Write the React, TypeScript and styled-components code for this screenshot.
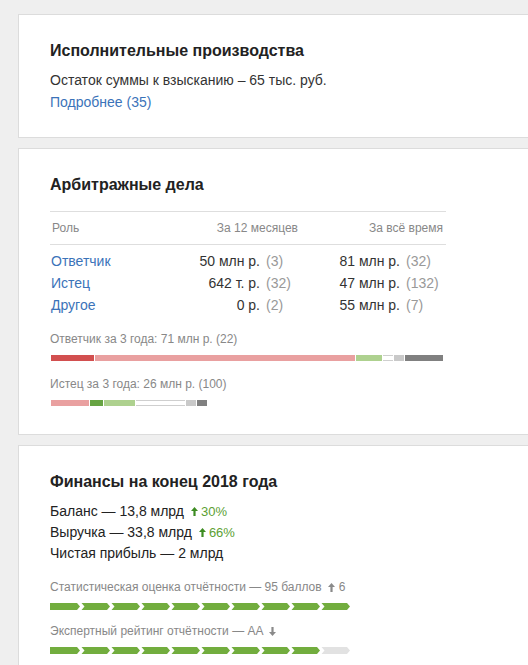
import styled, { createGlobalStyle } from "styled-components";

const GlobalStyle = createGlobalStyle`
  html, body {
    margin: 0;
    padding: 0;
    overflow: hidden;
    background: #efefef;
  }
  body {
    font-family: "Liberation Sans", Arial, sans-serif;
    color: #333;
  }
`;

type Part = { w: number; c: string; outline?: boolean };

const defendantBar: Part[] = [
  { w: 43, c: "#d24f4f" },
  { w: 260, c: "#e9a0a0" },
  { w: 26, c: "#aed18f" },
  { w: 10, c: "#fff", outline: true },
  { w: 10, c: "#c9c9c9" },
  { w: 38, c: "#808080" },
];

const plaintiffBar: Part[] = [
  { w: 38, c: "#e9a0a0" },
  { w: 13, c: "#67a443" },
  { w: 31, c: "#aed18f" },
  { w: 49, c: "#fff", outline: true },
  { w: 10, c: "#c9c9c9" },
  { w: 10, c: "#808080" },
];

const cases = [
  { role: "Ответчик", year: "50 млн р.", yearN: "(3)", all: "81 млн р.", allN: "(32)" },
  { role: "Истец", year: "642 т. р.", yearN: "(32)", all: "47 млн р.", allN: "(132)" },
  { role: "Другое", year: "0 р.", yearN: "(2)", all: "55 млн р.", allN: "(7)" },
];

function Arrow({ down, color }: { down?: boolean; color: string }) {
  return (
    <svg width="7" height="9" viewBox="0 0 7 9" style={{ transform: down ? "rotate(180deg)" : undefined }}>
      <path d="M3.5 0 L7 4 H4.6 V9 H2.4 V4 H0 Z" fill={color} />
    </svg>
  );
}

function ScoreBar({ filled }: { filled: number }) {
  const seg = 30;
  const h = 7;
  return (
    <ScoreSvg width={300} height={h} viewBox={`0 0 300 ${h}`}>
      {Array.from({ length: 10 }).map((_, i) => {
        const l = i * seg + (i > 0 ? 1.5 : 0);
        const r = (i + 1) * seg;
        const pts =
          i === 0
            ? `${l},0 ${r - 3},0 ${r},${h / 2} ${r - 3},${h} ${l},${h}`
            : `${l},0 ${r - 3},0 ${r},${h / 2} ${r - 3},${h} ${l},${h} ${l + 3},${h / 2}`;
        return <polygon key={i} points={pts} fill={i < filled ? "#72ad3e" : "#e2e2e2"} />;
      })}
    </ScoreSvg>
  );
}

export default function App() {
  return (
    <>
      <GlobalStyle />
      <Page>
        <Card>
          <Title>Исполнительные производства</Title>
          <Text>Остаток суммы к взысканию – 65 тыс. руб.</Text>
          <MoreLink href="#">Подробнее (35)</MoreLink>
        </Card>

        <Card $bottom={28}>
          <Title>Арбитражные дела</Title>
          <Table>
            <HeadRow>
              <HeadCell>Роль</HeadCell>
              <HeadCell $span $pr={7}>За 12 месяцев</HeadCell>
              <HeadCell $span $pr={3}>За всё время</HeadCell>
            </HeadRow>
            <Body>
              {cases.map((r) => (
                <Row key={r.role}>
                  <RoleLink href="#">{r.role}</RoleLink>
                  <Value>{r.year}</Value>
                  <Count>{r.yearN}</Count>
                  <Value>{r.all}</Value>
                  <Count>{r.allN}</Count>
                </Row>
              ))}
            </Body>
          </Table>

          <Label $top={15}>Ответчик за 3 года: 71 млн р. (22)</Label>
          <Stack>
            {defendantBar.map((p, i) => (
              <Piece key={i} $w={p.w} $c={p.c} $outline={p.outline} />
            ))}
          </Stack>
          <Label $top={15}>Истец за 3 года: 26 млн р. (100)</Label>
          <Stack>
            {plaintiffBar.map((p, i) => (
              <Piece key={i} $w={p.w} $c={p.c} $outline={p.outline} />
            ))}
          </Stack>
        </Card>

        <Card $bottom={26}>
          <Title>Финансы на конец 2018 года</Title>
          <Lines>
            <Line>
              Баланс — 13,8 млрд
              <Delta>
                <Arrow color="#3d8c22" />
                30%
              </Delta>
            </Line>
            <Line>
              Выручка — 33,8 млрд
              <Delta>
                <Arrow color="#3d8c22" />
                66%
              </Delta>
            </Line>
            <Line>Чистая прибыль — 2 млрд</Line>
          </Lines>

          <Label $top={15}>
            Статистическая оценка отчётности — 95 баллов
            <Mark>
              <Arrow color="#8a8a8a" />6
            </Mark>
          </Label>
          <ScoreBar filled={10} />
          <Label $top={13}>
            Экспертный рейтинг отчётности — АА
            <Mark>
              <Arrow down color="#8a8a8a" />
            </Mark>
          </Label>
          <ScoreBar filled={9} />
        </Card>
      </Page>
    </>
  );
}

const Page = styled.div`
  display: flex;
  flex-direction: column;
  gap: 10px;
  padding: 14px 0 0 18px;
`;

const Card = styled.section<{ $bottom?: number }>`
  width: 530px;
  box-sizing: border-box;
  background: #fff;
  border: 1px solid #dcdcdc;
  padding: 26px 0 ${(p) => p.$bottom ?? 24}px 31px;
`;

const Title = styled.h2`
  margin: 0;
  font-size: 16px;
  line-height: 20px;
  font-weight: bold;
  color: #222;
`;

const Text = styled.p`
  margin: 8px 0 0;
  font-size: 14px;
  line-height: 22px;
  color: #333;
`;

const MoreLink = styled.a`
  display: block;
  font-size: 14px;
  line-height: 22px;
  color: #3b73b9;
  text-decoration: none;
`;

const Table = styled.div`
  width: 396px;
  margin-top: 16px;
`;

const grid = `
  display: grid;
  grid-template-columns: 130px 80px 45px 95px 46px;
`;

const HeadRow = styled.div`
  ${grid}
  border-top: 1px solid #dedede;
  border-bottom: 1px solid #dedede;
  font-size: 12px;
  line-height: 32px;
  color: #888;
`;

const HeadCell = styled.div<{ $span?: boolean; $pr?: number }>`
  grid-column: ${(p) => (p.$span ? "span 2" : "auto")};
  text-align: ${(p) => (p.$span ? "right" : "left")};
  padding-left: ${(p) => (p.$span ? 0 : 2)}px;
  padding-right: ${(p) => p.$pr ?? 0}px;
`;

const Body = styled.div`
  padding-top: 5px;
`;

const Row = styled.div`
  ${grid}
  font-size: 14px;
  line-height: 22px;
`;

const RoleLink = styled.a`
  padding-left: 1px;
  color: #3b73b9;
  text-decoration: none;
`;

const Value = styled.span`
  text-align: right;
  color: #333;
  white-space: nowrap;
`;

const Count = styled.span`
  padding-left: 6px;
  color: #999;
  white-space: nowrap;
`;

const Label = styled.div<{ $top: number }>`
  display: flex;
  align-items: center;
  margin-top: ${(p) => p.$top}px;
  font-size: 12px;
  line-height: 16px;
  color: #888;
`;

const Stack = styled.div`
  display: flex;
  gap: 1px;
  margin-top: 8px;
  margin-left: 1px;
  height: 6px;
`;

const Piece = styled.div<{ $w: number; $c: string; $outline?: boolean }>`
  width: ${(p) => p.$w}px;
  flex: none;
  box-sizing: border-box;
  background: ${(p) => p.$c};
  border-top: ${(p) => (p.$outline ? "1px solid #cfcfcf" : "none")};
  border-bottom: ${(p) => (p.$outline ? "1px solid #cfcfcf" : "none")};
`;

const Lines = styled.div`
  margin-top: 9px;
  font-size: 14px;
  line-height: 21px;
  color: #222;
`;

const Line = styled.div`
  display: flex;
  align-items: center;
`;

const Delta = styled.span`
  display: inline-flex;
  align-items: center;
  gap: 3px;
  margin-left: 7px;
  font-size: 13px;
  color: #5c9f33;
`;

const Mark = styled.span`
  display: inline-flex;
  align-items: center;
  gap: 4px;
  margin-left: 6px;
`;

const ScoreSvg = styled.svg`
  display: block;
  margin-top: 8px;
`;
